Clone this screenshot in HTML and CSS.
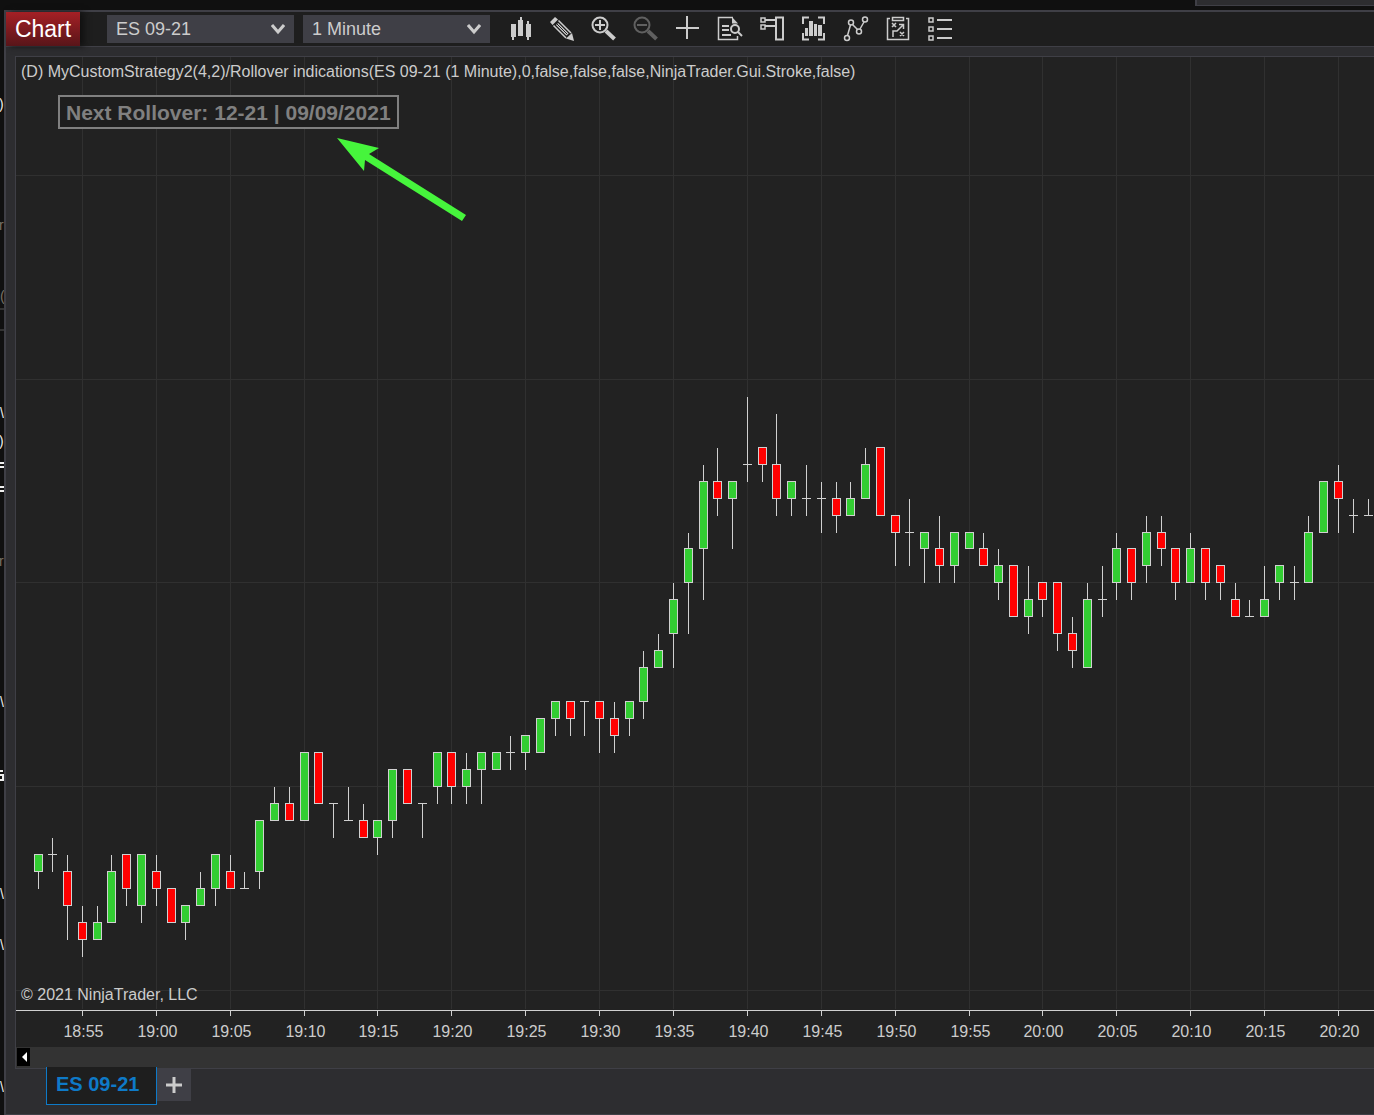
FILE: index.html
```
<!DOCTYPE html>
<html lang="en">
<head>
    <meta charset="UTF-8">
    <meta name="viewport" content="width=device-width, initial-scale=1.0">
    <title>Chart - ES 09-21</title>
    <link rel="stylesheet" href="styles.css">
</head>
<body>
    <div class="back-window"></div>

    <div class="desktop">
        <!-- window underneath, only its edge is visible -->
        <svg class="behind" aria-hidden="true">
            <g class="behind-light">
                <text x="-1" y="109">)</text>
                <text x="0" y="418">\</text>
                <text x="-1" y="446">)</text>
                <text x="0" y="707">\</text>
                <text x="0" y="899">\</text>
                <text x="0" y="950">\</text>
                <text x="0" y="1092">\</text>
                <path d="M0 463h4M0 467h4M0 487h4M0 491h4M0 771h3M0 775h4M0 780h4M3 774v6"/>
            </g>
            <g class="behind-dim">
                <text x="-1" y="230">r</text>
                <text x="0" y="301">(</text>
                <text x="-1" y="566">r</text>
            </g>
            <path class="behind-rule" d="M0 309h4M0 330h4"/>
        </svg>

        <main class="window">
            <header class="toolbar">
                <h1>Chart</h1>
                <select class="instrument" aria-label="Instrument">
                    <option>ES 09-21</option>
                </select>
                <select class="interval" aria-label="Interval">
                    <option>1 Minute</option>
                </select>
                <div class="tools">
                    <button type="button" aria-label="Chart style">
                        <svg viewBox="0 0 26 26"><path class="solid" d="M4 8h5v13H7v3H5v-3H4zM11 4h2V1h2v3h1v16h-5zM19 8h1V5h2v3h2v13h-2v3h-2v-3h-1z"/></svg>
                    </button>
                    <button type="button" aria-label="Drawing tools">
                        <svg viewBox="0 0 26 26">
                            <path class="solid" d="M1 6L6 1l3 2.500L3.500 9zM17 22.500l6-5.500 2 8z"/>
                            <path class="thin" d="M4.500 9.500L17 22M9.500 4.500L22 17"/>
                            <path d="M8 8l10.500 10.500" stroke-width="3"/>
                            <path class="cut" d="M8 8l10 10"/>
                        </svg>
                    </button>
                    <button type="button" aria-label="Zoom in">
                        <svg viewBox="0 0 26 26"><circle cx="9" cy="9" r="7.500"/><path d="M4 9h10M9 4v10"/><path class="handle" d="M15 15l8.500 8"/></svg>
                    </button>
                    <button type="button" aria-label="Zoom out" disabled>
                        <svg viewBox="0 0 26 26"><circle cx="9" cy="9" r="7.500"/><path d="M4 9h10"/><path class="handle" d="M15 15l8.500 8"/></svg>
                    </button>
                    <button type="button" aria-label="Crosshair">
                        <svg viewBox="0 0 26 26"><path d="M1 12h23M12 0v23"/></svg>
                    </button>
                    <button type="button" aria-label="Data box">
                        <svg viewBox="0 0 26 26">
                            <path class="thin" d="M16 1.500H1.500v22h19V20"/>
                            <path class="solid" d="M15 1l6 6.500h-6z"/>
                            <path d="M5 10h7M5 14h7M5 19h9"/>
                            <circle cx="18" cy="13" r="4"/><path d="M21 16l4 4"/>
                        </svg>
                    </button>
                    <button type="button" aria-label="Chart trader">
                        <svg viewBox="0 0 26 26"><path class="thin" d="M2 2h4v4H2zM2 9h4v4H2z"/><path d="M6 4h11M6 10h11M17 1.500h7v22h-7z"/></svg>
                    </button>
                    <button type="button" aria-label="Data series">
                        <svg viewBox="0 0 26 26">
                            <path d="M8 1.500H2V8M17 1.500h6V8M8 23.500H2V17M17 23.500h6V17"/>
                            <path class="solid" d="M4 12h3v8H4zM8 5h4v15H8zM13 8h3v12h-3zM17 9h4v11h-4z"/>
                        </svg>
                    </button>
                    <button type="button" aria-label="Indicators">
                        <svg viewBox="0 0 26 26">
                            <path class="thin" d="M4.500 19.500L7.500 9M9.500 8.500l5 5M17 13l4-7"/>
                            <g class="thin"><circle cx="4" cy="22" r="2.500"/><circle cx="8" cy="6.500" r="2.500"/><circle cx="16" cy="15.500" r="2.500"/><circle cx="22" cy="3.500" r="2.500"/></g>
                        </svg>
                    </button>
                    <button type="button" aria-label="Strategies">
                        <svg viewBox="0 0 26 26">
                            <path class="thin" d="M5 2.500H2.500v21h21v-21H21M7.500 1.500h11v3h-11z"/>
                            <path class="thin" d="M7 7l4 4M11 7l-4 4M15 16l4 4M19 16l-4 4M8 21v-6h4l6-6M14 8.500h4.500V13"/>
                        </svg>
                    </button>
                    <button type="button" aria-label="Properties">
                        <svg viewBox="0 0 26 26"><path class="thin" d="M2 2h4v4H2zM2 11h4v4H2zM2 20h4v4H2z"/><path d="M10 4h15M10 13h15M10 22h15"/></svg>
                    </button>
                </div>
            </header>

            <section class="panel">
                <div class="chart">
                    <svg id="plot" role="img" aria-label="ES 09-21 1 minute candlesticks"></svg>
                    <p class="caption">(D) MyCustomStrategy2(4,2)/Rollover indications(ES 09-21 (1 Minute),0,false,false,false,NinjaTrader.Gui.Stroke,false)</p>
                    <p class="rollover">Next Rollover: 12-21 | 09/09/2021</p>
                    <p class="copyright">© 2021 NinjaTrader, LLC</p>
                </div>
                <div class="scrollbar">
                    <button type="button" aria-label="Scroll left"><svg viewBox="0 0 13 18"><path d="M10 4v10L5 9z"/></svg></button>
                </div>
            </section>

            <nav class="tabs">
                <a class="tab" href="#plot">ES 09-21</a>
                <button class="add-tab" type="button" aria-label="Add tab"><svg viewBox="0 0 16 16"><path d="M0 8h16M8 0v16"/></svg></button>
            </nav>
        </main>
    </div>

    <script src="chart.js"></script>
</body>
</html>
```
FILE: styles.css
```
* {
    box-sizing: border-box;
}
body {
    margin: 0;
    height: 100vh;
    display: flex;
    flex-direction: column;
    background-color: #101010;
    color: #ccc;
    font-family: "Liberation Sans", Arial, sans-serif;
    font-size: 16px;
    overflow: hidden;
}
h1, p {
    margin: 0;
    font-weight: normal;
}
button {
    padding: 0;
    border: 0;
    background: none;
}
.back-window {
    flex: none;
    align-self: flex-end;
    width: 13%;
    height: 6px;
    margin-bottom: 4px;
    background-color: #2d2d30;
    border-left: 2px solid #3f3f46;
    border-bottom: 1px solid #3f3f46;
}
.desktop {
    flex: 1;
    display: flex;
    min-height: 0;
}

/* edge of the window underneath */
.behind {
    flex: none;
    width: 4px;
    height: 100vh;
    margin-top: -10px;
    font-size: 14px;
}
.behind-light {
    fill: #eee;
}
.behind-light path {
    stroke: #eee;
    stroke-width: 2;
}
.behind-dim {
    fill: #7a7266;
}
.behind-rule {
    stroke: #333;
    stroke-width: 2;
}

.window {
    flex: 1;
    min-width: 0;
    display: flex;
    flex-direction: column;
    background-color: #2d2d30;
    border: 2px solid #3f3f46;
    border-right: 0;
    border-bottom-width: 1px;
}

/* toolbar */
.toolbar {
    flex: none;
    display: flex;
    align-items: center;
    height: 35px;
    background-color: #1e1e1e;
    border-bottom: 1px solid #3f3f46;
}
.toolbar h1 {
    width: 74px;
    margin-right: 27px;
    color: #fff;
    font-size: 23px;
    line-height: 34px;
    text-align: center;
    background: linear-gradient(#a52025, #581519);
    box-shadow: 4px 0 6px #111;
}
.toolbar select {
    appearance: none;
    width: 187px;
    height: 28px;
    margin: 0 9px 0 0;
    padding: 0 9px;
    border: 0;
    border-radius: 0;
    color: #ccc;
    font-family: inherit;
    font-size: 18px;
    background: #3f3f46 url("data:image/svg+xml,%3Csvg xmlns='http://www.w3.org/2000/svg' width='14' height='12'%3E%3Cpath d='M1 2l6 7 6-7' fill='none' stroke='%23ccc' stroke-width='3'/%3E%3C/svg%3E") no-repeat right 9px center;
}
.tools {
    display: flex;
}
.tools button {
    width: 42px;
    height: 34px;
    color: #ccc;
}
.tools button:disabled {
    color: #606060;
}
.tools svg {
    display: block;
    width: 26px;
    height: 26px;
    margin: 0 auto;
    fill: none;
    stroke: currentColor;
    stroke-width: 2;
}
.tools .solid {
    fill: currentColor;
    stroke: none;
}
.tools .thin {
    stroke-width: 1.5;
}
.tools .handle {
    stroke-width: 4;
}
.tools .cut {
    stroke: #1e1e1e;
    stroke-width: 1;
}

/* chart */
.panel {
    flex: 1;
    min-height: 0;
    display: flex;
    flex-direction: column;
    margin: 9px 0 0 9px;
    border: 1px solid #3f3f46;
    border-right: 0;
}
.chart {
    flex: 1;
    min-height: 0;
    position: relative;
    background-color: #222;
}
#plot {
    display: block;
    width: 100%;
    height: 100%;
    shape-rendering: crispEdges;
}
#plot text {
    fill: #ccc;
    text-anchor: middle;
}
.grid {
    stroke: #303030;
}
.axis, .wick {
    stroke: #d0d0d0;
}
.up, .down {
    stroke: #d0d0d0;
}
.up {
    fill: #32cd32;
}
.down {
    fill: #f00;
}
.arrow {
    fill: #46f53c;
    shape-rendering: auto;
}
.caption, .copyright, .rollover {
    position: absolute;
    white-space: nowrap;
}
.caption {
    top: 5px;
    left: 5px;
    line-height: 20px;
}
.copyright {
    left: 5px;
    bottom: 42px;
    line-height: 20px;
}
.rollover {
    top: 38px;
    left: 42px;
    padding: 1px 6px 0;
    border: 2px solid #808080;
    background-color: #1e1e1e;
    color: #808080;
    font-size: 21px;
    font-weight: bold;
    line-height: 29px;
}
.scrollbar {
    flex: none;
    height: 21px;
    padding: 1px;
    background-color: #333;
}
.scrollbar button {
    display: block;
    width: 13px;
    height: 18px;
    background-color: #000;
}
.scrollbar svg {
    display: block;
    fill: #fff;
}

/* tabs */
.tabs {
    flex: none;
    display: flex;
    height: 45px;
    padding-left: 40px;
}
.tab {
    height: 38px;
    margin-top: -2px;
    padding: 0 17px 0 9px;
    border: 1px solid #0e7ac8;
    border-top: 0;
    background-color: #1e1e1e;
    color: #0e7ac8;
    font-size: 20px;
    font-weight: bold;
    line-height: 35px;
    text-decoration: none;
}
.add-tab {
    width: 34px;
    height: 32px;
    background-color: #3f3f46;
}
.add-tab svg {
    display: block;
    width: 16px;
    height: 16px;
    margin: 0 auto;
    stroke: #ccc;
    stroke-width: 3;
}
```
FILE: chart.js
```
// one minute bars from 18:52, [open, high, low, close] in ticks above the lowest grid line
const bars = [
    [7,8,6,8], [8,9,7,8], [7,8,3,5], [4,5,2,3], [3,5,3,4],
    [4,8,4,7], [8,8,5,6], [5,8,4,8], [7,8,5,6], [6,6,4,4],
    [4,5,3,5], [5,7,5,6], [6,8,5,8], [7,8,6,6], [6,7,6,6],
    [7,10,6,10], [10,12,10,11], [11,12,10,10], [10,14,10,14], [14,14,11,11],
    [11,11,9,11], [10,12,10,10], [10,11,9,9], [9,10,8,10], [10,13,9,13],
    [13,13,11,11], [11,11,9,11], [12,14,11,14], [14,14,11,12], [12,14,11,13],
    [13,14,11,14], [13,14,13,14], [14,15,13,14], [14,15,13,15], [14,16,14,16],
    [16,17,15,17], [17,17,15,16], [17,17,15,17], [17,17,14,16], [16,17,14,15],
    [16,17,15,17], [17,20,16,19], [19,21,19,20], [21,24,19,23], [24,27,21,26],
    [26,31,23,30], [30,32,28,29], [29,30,26,30], [31,35,30,31], [32,32,30,31],
    [31,34,28,29], [29,30,28,30], [29,31,28,29], [29,30,27,29], [29,30,27,28],
    [28,30,28,29], [29,32,29,31], [32,32,28,28], [28,28,25,27], [27,29,25,27],
    [26,27,24,27], [26,28,24,25], [25,27,24,27], [26,27,26,27], [26,27,25,25],
    [24,26,23,25], [25,25,22,22], [22,25,21,23], [24,24,22,23], [24,24,20,21],
    [21,22,19,20], [19,24,19,23], [23,25,22,23], [24,27,23,26], [26,26,23,24],
    [25,28,24,27], [27,28,25,26], [26,26,23,24], [24,27,24,26], [26,26,23,24],
    [25,25,23,24], [23,24,22,22], [22,23,22,22], [22,25,22,23], [24,25,23,25],
    [24,25,23,24], [24,28,24,27], [27,30,27,30], [30,31,27,29], [28,29,27,28],
    [28,29,28,28]
];

const plot = document.getElementById('plot');
const tickHeight = 16.97;
const barStep = 14.777;

function add(name, attrs, text) {
    const el = document.createElementNS('http://www.w3.org/2000/svg', name);
    for (const key in attrs) el.setAttribute(key, attrs[key]);
    if (text) el.textContent = text;
    plot.appendChild(el);
}

function line(cls, x1, y1, x2, y2) {
    add('line', { class: cls, x1, y1, x2, y2 });
}

const barX = i => Math.floor(66.44 + barStep * (i - 3)) + 0.5;
const priceY = n => Math.floor(933.2 - tickHeight * n) + 0.5;

function draw() {
    const width = plot.clientWidth;
    const axisY = plot.clientHeight - 36.5;
    plot.replaceChildren();

    for (let n = 0; n <= 48; n += 12) {
        line('grid', 0, priceY(n), width, priceY(n));
    }
    line('axis', 0, axisY, width, axisY);

    // a grid line and a label every five minutes
    for (let i = 3; barX(i) < width; i += 5) {
        const x = barX(i);
        const minutes = 18 * 60 + 52 + i;
        const label = Math.floor(minutes / 60) + ':' + String(minutes % 60).padStart(2, '0');
        line('grid', x, 0, x, axisY - 2);
        line('axis', x, axisY, x, axisY + 5);
        add('text', { x: x + 1, y: axisY + 26 }, label);
    }

    bars.forEach(([open, high, low, close], i) => {
        const x = barX(i);
        const top = priceY(Math.max(open, close));
        const bottom = priceY(Math.min(open, close));
        line('wick', x, priceY(high) + 0.5, x, priceY(low) + 0.5);
        if (open === close) {
            line('wick', x - 4.5, top, x + 4.5, top);
        } else {
            add('rect', {
                class: close > open ? 'up' : 'down',
                x: x - 4, y: top, width: 8, height: bottom - top
            });
        }
    });

    add('polygon', { class: 'arrow', points: '321,81 363,91 353,97 450,158 446,164 349,103 348,114' });
}

draw();
window.addEventListener('resize', draw);
```
